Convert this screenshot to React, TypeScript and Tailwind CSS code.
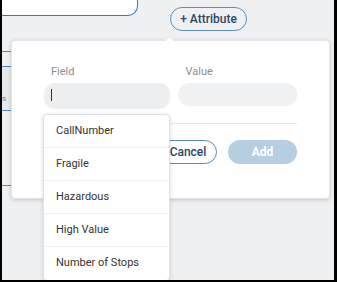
import React from 'react'

const options = ['CallNumber', 'Fragile', 'Hazardous', 'High Value', 'Number of Stops']

export default function App() {
  return (
    <div
      className="relative w-[337px] h-[282px] overflow-hidden bg-[#eef0f2] border-l-2 border-r-[3px] border-b-2 border-black"
      style={{ fontFamily: 'Roboto, "Noto Sans", sans-serif' }}
    >
      {/* page behind the popover */}
      <div className="flex items-start">
        <div className="w-[136px] h-[16px] bg-white border-b border-r border-[#3f76a8] rounded-br-[10px]" />
        <button className="ml-[32px] mt-[7px] h-[24px] w-[77px] rounded-full border border-[#5d8cb8] bg-transparent text-[12px] font-medium text-[#2b4866] leading-none">
          + Attribute
        </button>
      </div>
      <div className="flex flex-col w-[9px] mt-[20px]">
        <div className="h-[15px] border-t border-[#5b86b0]" />
        <div className="h-[45px] border-t border-b border-[#5b86b0] bg-[#e6e9ec] text-[8px] text-[#5b86b0] pt-[28px] leading-none">s</div>
        <div className="h-[75px] border-b border-[#5b86b0]" />
      </div>

      {/* popover */}
      <div className="absolute left-[9px] top-[40px] w-[319px] h-[159px] bg-white rounded-[4px] shadow-[0_1px_4px_rgba(0,0,0,0.18)] border border-[#e3e5e8]">
        <div className="absolute -top-[4px] left-[154px] w-[7px] h-[7px] bg-white rotate-45 border-l border-t border-[#e3e5e8]" />
        <div className="pl-[32px] pr-[32px] pt-[24px]">
          <div className="flex gap-[8px]">
            <div className="w-[127px]">
              <div className="pl-[7px] text-[11px] text-[#8a8d91] leading-[14px]">Field</div>
              <div className="mt-[4px] h-[24px] rounded-[11px] bg-[#eceef0] shadow-[0_2px_2px_rgba(0,0,0,0.08)] flex items-center pl-[7px]">
                <div className="w-px h-[12px] bg-[#333]" />
              </div>
            </div>
            <div className="w-[119px]">
              <div className="pl-[7px] text-[11px] text-[#8a8d91] leading-[14px]">Value</div>
              <div className="mt-[4px] h-[23px] rounded-[11px] bg-[#f0f1f3]" />
            </div>
          </div>
          <div className="mt-[16px] border-t border-[#e6e8ea]" />
          <div className="mt-[16px] flex justify-end gap-[11px]">
            <button className="h-[24px] w-[58px] rounded-full border border-[#5d8cb8] bg-white text-[12px] font-medium text-[#2b4866] leading-none">
              Cancel
            </button>
            <button className="h-[24px] w-[69px] rounded-full bg-[#b7cde0] text-[12px] font-bold text-white leading-none">
              Add
            </button>
          </div>
        </div>
      </div>

      {/* dropdown menu */}
      <div className="absolute left-[41px] top-[114px] w-[127px] bg-white rounded-[4px] border border-[#e0e2e5] shadow-[0_1px_4px_rgba(0,0,0,0.15)]">
        {options.map((o, i) => (
          <div
            key={o}
            className={`h-[33px] flex items-center pl-[12px] text-[11px] text-[#333] ${i < options.length - 1 ? 'border-b border-[#eeeff1]' : ''}`}
          >
            {o}
          </div>
        ))}
      </div>
    </div>
  )
}
